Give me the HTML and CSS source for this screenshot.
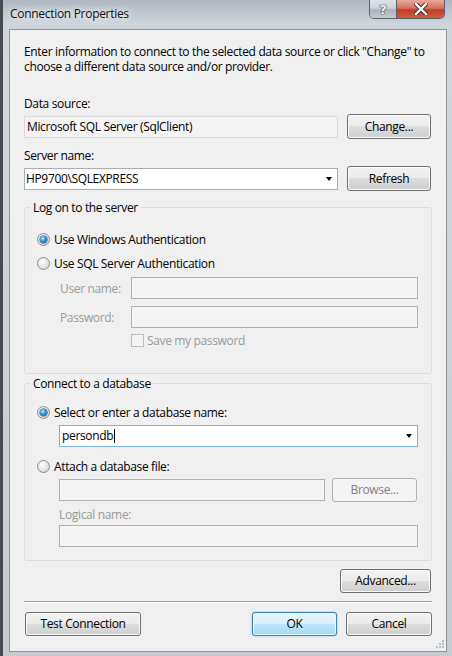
FILE: index.html
```html
<!DOCTYPE html>
<html>
<head>
<meta charset="utf-8">
<link rel="stylesheet" href="styles.css">
</head>
<body>
<div class="win">
  <div class="titlebar">
    <span class="title">Connection Properties</span>
    <div class="caps">
      <div class="cap help">?</div>
      <div class="cap close">
        <svg width="14" height="12" viewBox="0 0 14 12">
          <path d="M2 1 L12 11 M12 1 L2 11" stroke="#3a2a28" stroke-width="4.2" stroke-linecap="square"/>
          <path d="M2 1 L12 11 M12 1 L2 11" stroke="#ffffff" stroke-width="2.4" stroke-linecap="square"/>
        </svg>
      </div>
    </div>
  </div>
  <div class="client">
    <div class="intro">
      <div class="line">Enter information to connect to the selected data source or click "Change" to</div>
      <div class="line">choose a different data source and/or provider.</div>
    </div>

    <div class="lbl first">Data source:</div>
    <div class="row">
      <div class="field ro">Microsoft SQL Server (SqlClient)</div>
      <button class="btn side">Change...</button>
    </div>

    <div class="lbl">Server name:</div>
    <div class="row">
      <div class="field combo"><span>HP9700\SQLEXPRESS</span><span class="arrow"></span></div>
      <button class="btn side">Refresh</button>
    </div>

    <fieldset class="group g1">
      <legend>Log on to the server</legend>
      <div class="opt"><span class="radio on"></span><span>Use Windows Authentication</span></div>
      <div class="opt"><span class="radio"></span><span>Use SQL Server Authentication</span></div>
      <div class="cred user"><span class="dlbl">User name:</span><div class="field dis"></div></div>
      <div class="cred pass"><span class="dlbl">Password:</span><div class="field dis"></div></div>
      <div class="chk"><span class="box"></span><span class="dtext">Save my password</span></div>
    </fieldset>

    <fieldset class="group g2">
      <legend>Connect to a database</legend>
      <div class="opt"><span class="radio on"></span><span>Select or enter a database name:</span></div>
      <div class="field combo focus db"><span>persondb<span class="caret"></span></span><span class="arrow"></span></div>
      <div class="opt attach"><span class="radio"></span><span>Attach a database file:</span></div>
      <div class="filerow"><div class="field dis file"></div><button class="btn disabled browse">Browse...</button></div>
      <div class="dlbl logical">Logical name:</div>
      <div class="field dis logname"></div>
    </fieldset>

    <div class="advrow"><button class="btn adv">Advanced...</button></div>
    <div class="sep"></div>
    <div class="bottom">
      <button class="btn test">Test Connection</button>
      <div class="okcancel">
        <button class="btn ok">OK</button>
        <button class="btn cancel">Cancel</button>
      </div>
    </div>
    <svg class="grip" width="8" height="8" viewBox="0 0 8 8">
      <rect x="6" y="0" width="2" height="2" fill="#b9bec4"/>
      <rect x="3" y="3" width="2" height="2" fill="#b9bec4"/>
      <rect x="6" y="3" width="2" height="2" fill="#b9bec4"/>
      <rect x="0" y="6" width="2" height="2" fill="#b9bec4"/>
      <rect x="3" y="6" width="2" height="2" fill="#b9bec4"/>
      <rect x="6" y="6" width="2" height="2" fill="#b9bec4"/>
    </svg>
  </div>
</div>
</body>
</html>
```
FILE: styles.css
```css
* { box-sizing: border-box; }
html, body { margin: 0; padding: 0; }
body {
  width: 452px;
  height: 656px;
  overflow: hidden;
  background: #5d6269;
  font-family: "Open Sans", "Noto Sans", sans-serif;
  font-size: 12px;
  letter-spacing: -0.35px;
  color: #000;
}
.win {
  width: 452px;
  height: 656px;
  border-left: 3px solid #474b51;
  padding: 0 5px 4px 6px;
  background: linear-gradient(#aeb6bf 0px, #cfd5dc 24px, #d2d7dd 60px, #c6cbd1 100%);
  display: flex;
  flex-direction: column;
}
.titlebar {
  height: 29px;
  display: flex;
  justify-content: space-between;
  align-items: flex-start;
  flex: none;
}
.title {
  margin-top: 6px;
  padding-left: 1px;
  line-height: 16px;
  color: #101010;
  letter-spacing: -0.3px;
  text-shadow: 0 0 6px #fff, 0 0 10px #fff;
}
.caps {
  display: flex;
  margin-right: 2px;
  border: 1px solid #5a6068;
  border-top: none;
  border-radius: 0 0 5px 5px;
  overflow: hidden;
  height: 19px;
}
.cap {
  height: 18px;
  display: flex;
  align-items: center;
  justify-content: center;
}
.help {
  width: 27px;
  border-right: 1px solid #5a6068;
  background: linear-gradient(#dde2e8 0%, #cdd3da 45%, #aab3bd 55%, #c2cad3 100%);
  color: #f4f6f8;
  font-family: "DejaVu Sans", sans-serif;
  font-weight: bold;
  font-size: 13px;
  letter-spacing: 0;
  text-shadow: 0 0 1px #333, 0 0 1px #333, 0 0 1px #333;
}
.close {
  width: 47px;
  background: linear-gradient(#e9a99b 0%, #d5715f 45%, #c13e27 55%, #d25a3f 100%);
}
.client {
  flex: 1;
  position: relative;
  border: 1px solid #8c939b;
  background: #f0f0f0;
  padding: 14px 14px 0 14px;
}
.intro .line {
  height: 15px;
  line-height: 15px;
  white-space: nowrap;
}
.lbl {
  line-height: 15px;
  margin-top: 9px;
}
.lbl.first { margin-top: 22px; }
.row {
  display: flex;
  align-items: center;
  justify-content: space-between;
  margin-top: 3px;
  height: 25px;
}
.field {
  height: 22px;
  border: 1px solid #abadb3;
  background: #fff;
  line-height: 20px;
  white-space: nowrap;
}
.row .field { width: 314px; }
.field.ro {
  background: #f4f4f4;
  border-color: #dadada;
  padding-left: 2px;
}
.field.combo {
  display: flex;
  align-items: center;
  justify-content: space-between;
  padding: 0 5px 0 1px;
  border-color: #abadb3;
}
.arrow {
  width: 0;
  height: 0;
  border-left: 3.5px solid transparent;
  border-right: 3.5px solid transparent;
  border-top: 4px solid #000;
}
.btn {
  font: inherit;
  letter-spacing: inherit;
  color: #000;
  padding: 0;
  border: 1px solid #707070;
  border-radius: 3px;
  background: linear-gradient(#f2f2f2 0%, #ebebeb 50%, #dddddd 50%, #cfcfcf 100%);
  box-shadow: inset 0 0 0 1px #fafafa;
  height: 24px;
  line-height: 20px;
}
.btn.side {
  width: 84px;
  height: 25px;
  margin-right: 1px;
}
.btn.disabled {
  border-color: #adb2b5;
  background: #f4f4f4;
  box-shadow: none;
  color: #838383;
}
.group {
  margin: 9px 0 0;
  padding: 17px 13px 25px 12px;
  border: 1px solid #d5dfe5;
  border-radius: 3px;
  min-width: 0;
}
.group legend {
  padding: 0 2px;
  margin-left: -6px;
  line-height: 15px;
}
.g2 {
  margin-top: 2px;
  padding-top: 14px;
  padding-bottom: 13px;
}
.opt {
  display: flex;
  align-items: center;
  gap: 4px;
  height: 15px;
}
.opt + .opt { margin-top: 9px; }
.radio {
  width: 13px;
  height: 13px;
  border-radius: 50%;
  border: 1px solid #8b8e92;
  background: radial-gradient(circle at 40% 35%, #ffffff 0%, #e8e8e8 45%, #c6c6c6 100%);
  display: flex;
  align-items: center;
  justify-content: center;
  flex: none;
}
.radio.on::after {
  content: "";
  width: 7px;
  height: 7px;
  border-radius: 50%;
  background: radial-gradient(circle at 40% 35%, #b8ecff 0%, #2a94d6 45%, #0b4b7a 100%);
  box-shadow: 0 0 0 0.5px #1a4a6e;
}
.cred {
  display: flex;
  align-items: center;
  padding-left: 23px;
  height: 22px;
}
.cred.user { margin-top: 6px; }
.cred.pass { margin-top: 7px; }
.cred .dlbl { width: 71px; }
.cred .field { width: 287px; }
.dlbl, .dtext { color: #9a9a9a; }
.field.dis {
  background: #f4f4f4;
  border-color: #adb2b5;
}
.chk {
  display: flex;
  align-items: center;
  gap: 3px;
  height: 15px;
  margin-top: 5px;
  padding-left: 94px;
}
.box {
  width: 13px;
  height: 13px;
  border: 1px solid #bdbdbd;
  background: #f4f4f4;
  flex: none;
}
.field.db {
  margin: 5px 0 0 22px;
  width: 359px;
  padding-left: 2px;
}
.field.focus { border-color: #7fb0e3; }
.caret {
  display: inline-block;
  width: 1px;
  height: 14px;
  background: #000;
  vertical-align: -3px;
  margin-left: 1px;
}
.opt.attach { margin-top: 12px; }
.filerow {
  display: flex;
  align-items: center;
  justify-content: space-between;
  margin: 4px 1px 0 22px;
  height: 24px;
}
.field.file { width: 266px; }
.btn.browse { width: 85px; height: 24px; }
.logical {
  margin: 5px 0 0 22px;
  line-height: 15px;
}
.field.logname {
  margin: 3px 0 0 22px;
  width: 359px;
}
.advrow {
  display: flex;
  justify-content: flex-end;
  margin-top: 8px;
  padding-right: 1px;
}
.btn.adv { width: 91px; }
.sep {
  margin-top: 8px;
  height: 1px;
  background: #a0a0a0;
  box-shadow: 0 1px 0 #fff;
}
.bottom {
  display: flex;
  justify-content: space-between;
  margin-top: 10px;
}
.btn.test { width: 116px; margin-left: 1px; }
.okcancel { display: flex; gap: 9px; }
.btn.ok {
  width: 85px;
  border-color: #3c7fb1;
  background: linear-gradient(#eaf6fd 0%, #d9f0fc 50%, #bee6fd 50%, #a7d9f5 100%);
  box-shadow: inset 0 0 0 1px #e8f6fd, 0 0 2px #6fb2e4;
}
.btn.cancel { width: 86px; }
.grip {
  position: absolute;
  right: 2px;
  bottom: 3px;
}
```
